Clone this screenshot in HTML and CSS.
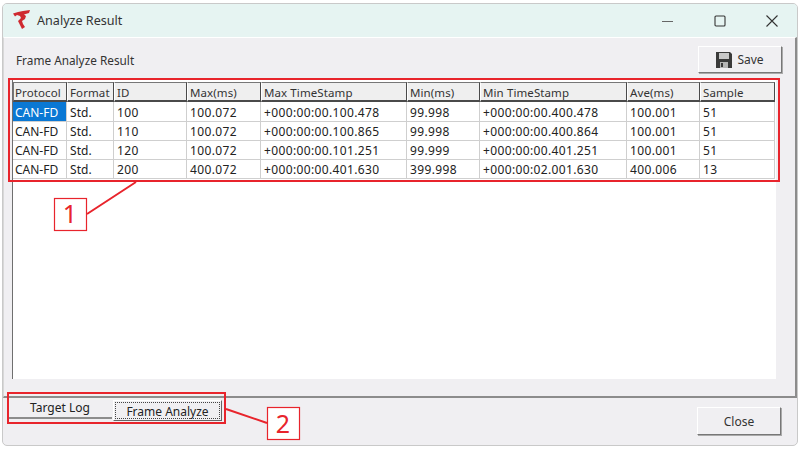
FILE: index.html
```html
<!DOCTYPE html>
<html lang="en">
<head>
<meta charset="utf-8">
<title>Analyze Result</title>
<link rel="stylesheet" href="styles.css">
</head>
<body>
<div class="window">
  <header class="titlebar">
    <svg class="logo" width="18" height="20" viewBox="0 0 18 20"><path d="M0 3.5 L5 2 L10 1 L17 0 L16 3 L11 4.5 L13 6 L12 9 L9 11 L10 14 L12 17 L9 19 L7 15 L5 11 L8 8 L7 6 L4 5 L2 6.5 Z" fill="#cf2a30"/></svg>
    <span class="title">Analyze Result</span>
    <div class="controls">
      <svg width="12" height="12" viewBox="0 0 12 12"><path d="M0 6.5H11" stroke="#666" stroke-width="1.2"/></svg>
      <svg width="12" height="12" viewBox="0 0 12 12"><rect x="1" y="1" width="10" height="10" rx="1" fill="none" stroke="#333" stroke-width="1.1"/></svg>
      <svg width="12" height="12" viewBox="0 0 12 12"><path d="M0.5 0.5L11.5 11.5M11.5 0.5L0.5 11.5" stroke="#333" stroke-width="1.1"/></svg>
    </div>
  </header>
  <main class="pane">
    <div class="pane-head">
      <span class="caption">Frame Analyze Result</span>
      <button class="btn btn-save">
        <svg width="16" height="16" viewBox="0 0 16 16"><path d="M0 0H14L16 2V16H0Z" fill="#3a3a3a"/><rect x="3" y="1" width="10" height="6" fill="#c8c8c8"/><rect x="4" y="10" width="8" height="6" fill="#b5b5b5"/><rect x="5" y="11" width="2" height="4" fill="#3a3a3a"/></svg>
        <span>Save</span>
      </button>
    </div>
    <div class="list">
      <table class="grid">
        <colgroup>
          <col class="c1"><col class="c2"><col class="c3"><col class="c4"><col class="c5"><col class="c6"><col class="c7"><col class="c8"><col class="c9">
        </colgroup>
        <thead>
          <tr><th>Protocol</th><th>Format</th><th>ID</th><th>Max(ms)</th><th>Max TimeStamp</th><th>Min(ms)</th><th>Min TimeStamp</th><th>Ave(ms)</th><th>Sample</th></tr>
        </thead>
        <tbody>
          <tr><td class="selected">CAN-FD</td><td>Std.</td><td>100</td><td>100.072</td><td>+000:00:00.100.478</td><td>99.998</td><td>+000:00:00.400.478</td><td>100.001</td><td>51</td></tr>
          <tr><td>CAN-FD</td><td>Std.</td><td>110</td><td>100.072</td><td>+000:00:00.100.865</td><td>99.998</td><td>+000:00:00.400.864</td><td>100.001</td><td>51</td></tr>
          <tr><td>CAN-FD</td><td>Std.</td><td>120</td><td>100.072</td><td>+000:00:00.101.251</td><td>99.999</td><td>+000:00:00.401.251</td><td>100.001</td><td>51</td></tr>
          <tr><td>CAN-FD</td><td>Std.</td><td>200</td><td>400.072</td><td>+000:00:00.401.630</td><td>399.998</td><td>+000:00:02.001.630</td><td>400.006</td><td>13</td></tr>
        </tbody>
      </table>
    </div>
  </main>
  <footer class="footer">
    <div class="tabs">
      <div class="tab">Target Log</div>
      <div class="tab tab-active"><span class="focus">Frame Analyze</span></div>
    </div>
    <button class="btn btn-close">Close</button>
  </footer>
</div>
<svg class="annot" width="800" height="449" viewBox="0 0 800 449">
  <g fill="none" stroke="#e8242c" stroke-width="2">
    <rect x="9" y="79" width="770" height="102"/>
    <rect x="8" y="393" width="217" height="30"/>
    <path d="M87 214L136 182M226 409L267 423"/>
  </g>
  <g fill="#fff" stroke="#e8242c" stroke-width="1.2">
    <rect x="54.5" y="198.5" width="32" height="32"/>
    <rect x="267.5" y="407.5" width="32" height="32"/>
  </g>
  <g fill="#e8242c" font-family="'Noto Sans', sans-serif" font-size="25" text-anchor="middle">
    <text x="70" y="223">1</text>
    <text x="283" y="433">2</text>
  </g>
</svg>
</body>
</html>
```
FILE: styles.css
```css
* { box-sizing: border-box; }
html, body { margin: 0; padding: 0; }
body {
  width: 800px;
  height: 449px;
  overflow: hidden;
  background: #fff;
  padding: 3px 2px 3px 2px;
  font-family: "Noto Sans", sans-serif;
  font-size: 12px;
  color: #222;
  position: relative;
}
.window {
  height: 443px;
  display: flex;
  flex-direction: column;
  background: #f0eff2;
  border: 1px solid #c9c9c9;
  border-radius: 5px;
  overflow: hidden;
}
.titlebar {
  height: 33px;
  flex: none;
  display: flex;
  align-items: center;
  padding-left: 10px;
  background: #e6f4f2;
}
.logo { margin-top: -2px; }
.title { margin-left: 6px; font-size: 12.6px; color: #333; }
.controls {
  margin-left: auto;
  display: flex;
  gap: 40px;
  padding-right: 19px;
  align-items: center;
}
.pane {
  flex: none;
  height: 361px;
  padding: 0 19px 0 8px;
  display: flex;
  flex-direction: column;
  border-bottom: 2px solid #8c8c8c;
  border-right: 2px solid #8c8c8c;
  border-left: 1px solid #d8d8d8;
  border-top: 1px solid #fff;
}
.pane-head {
  height: 42px;
  flex: none;
  display: flex;
  align-items: center;
  padding-top: 1px;
}
.caption { padding-left: 4px; color: #333; font-size: 11.8px; }
.btn {
  font: inherit;
  color: #333;
  background: #f0eff2;
  border: 1px solid;
  border-color: #fff #777 #777 #fff;
  box-shadow: 1px 1px 0 #aaa;
  padding: 0;
  display: flex;
  align-items: center;
  justify-content: center;
}
.btn-save {
  width: 84px;
  height: 27px;
  margin-left: auto;
  margin-right: -6px;
  gap: 5px;
}
.list {
  flex: 1;
  background: #fff;
  border-left: 1px solid #6f6f6f;
  margin-bottom: 17px;
  overflow: hidden;
  padding-top: 2px;
}
.grid {
  border-collapse: separate;
  border-spacing: 0;
  table-layout: fixed;
  width: 762px;
}
.c1 { width: 54px; }
.c2 { width: 47px; }
.c3 { width: 73px; }
.c4 { width: 74px; }
.c5 { width: 146px; }
.c6 { width: 73px; }
.c7 { width: 147px; }
.c8 { width: 73px; }
.c9 { width: 75px; }
th, td {
  font-weight: 400;
  text-align: left;
  white-space: nowrap;
  overflow: hidden;
}
th {
  height: 20px;
  padding: 1px 0 0 2px;
  font-size: 11.5px;
  letter-spacing: 0.1px;
  background: #efefef;
  border-right: 1px solid #4a4a4a;
  border-bottom: 2px solid #4a4a4a;
  border-top: 1px solid #777;
  border-left: 1px solid #fff;
  line-height: 15px;
  color: #333;
}
th:first-child { border-left-color: #777; padding-left: 1px; }
td {
  height: 19px;
  padding: 1px 0 0 3px;
  line-height: 16px;
  border-right: 1px solid #cfcfcf;
  border-bottom: 1px solid #cfcfcf;
  letter-spacing: 0.36px;
}
tbody tr:first-child td { height: 20px; padding-top: 2px; }
td:first-child { padding-left: 2px; letter-spacing: 0; }
td:nth-child(2) { letter-spacing: 0.1px; }
.selected { background: #0a78d4; color: #fff; }
.footer {
  flex: 1;
  display: flex;
  justify-content: space-between;
  align-items: flex-start;
  padding-right: 16px;
}
.tabs { display: flex; padding-left: 5px; gap: 1px; }
.tab {
  width: 104px;
  height: 21px;
  border-bottom: 2px solid #8c8c8c;
  text-align: center;
  line-height: 19px;
  color: #222;
}
.tab-active {
  width: 109px;
  height: 21px;
  margin-top: 2px;
  background: #f0eff2;
  border: 1px solid;
  border-color: #fff #666 #666 #fff;
  padding: 1px;
  line-height: 15px;
}
.focus {
  display: block;
  height: 17px;
  border: 1px dotted #444;
  padding-top: 1px;
}
.btn-close {
  width: 84px;
  height: 28px;
  margin-top: 9px;
}
.annot {
  position: absolute;
  left: 0;
  top: 0;
}
```
